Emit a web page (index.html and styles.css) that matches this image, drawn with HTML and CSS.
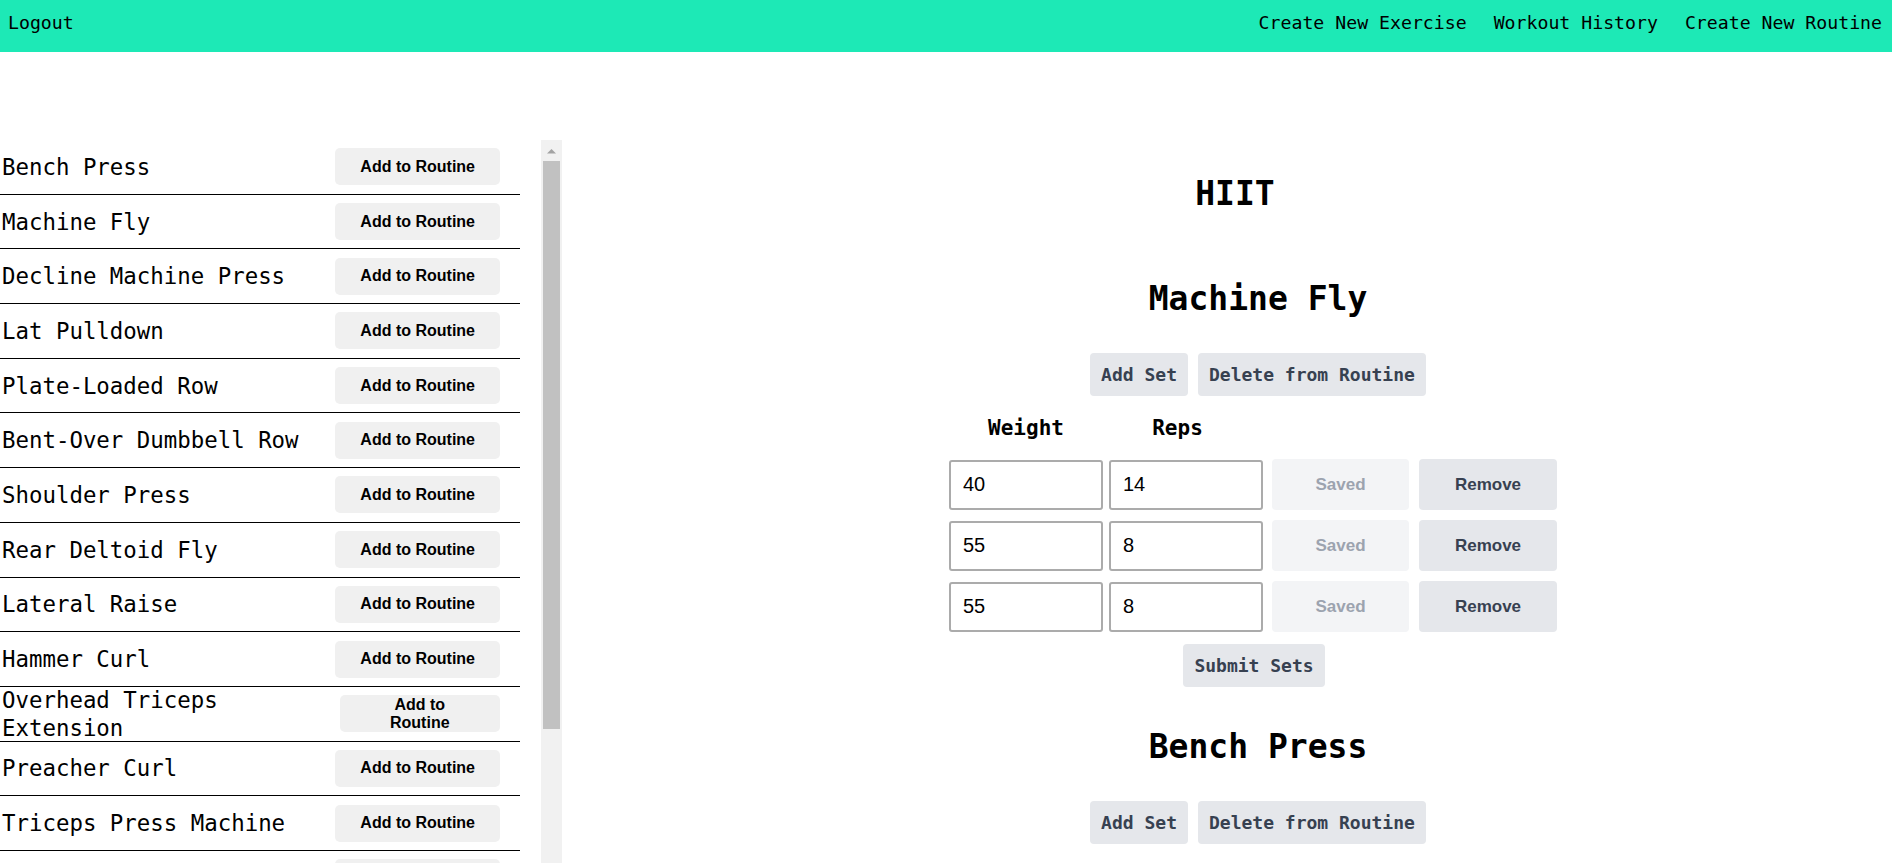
FILE: index.html
```html
<!DOCTYPE html>
<html lang="en">
<head>
<meta charset="utf-8">
<title>Routine</title>
<link rel="stylesheet" href="styles.css">
</head>
<body>
<nav class="topbar">
  <a class="nav-link">Logout</a>
  <div class="nav-right">
    <a class="nav-link">Create New Exercise</a>
    <a class="nav-link">Workout History</a>
    <a class="nav-link">Create New Routine</a>
  </div>
</nav>
<div class="page">
  <aside class="sidebar">
    <div class="list-viewport">
      <ul class="exercise-list">
        <li class="exercise-row"><p class="exercise-name">Bench Press</p><button class="add-btn">Add to Routine</button></li>
        <li class="exercise-row"><p class="exercise-name">Machine Fly</p><button class="add-btn">Add to Routine</button></li>
        <li class="exercise-row"><p class="exercise-name">Decline Machine Press</p><button class="add-btn">Add to Routine</button></li>
        <li class="exercise-row"><p class="exercise-name">Lat Pulldown</p><button class="add-btn">Add to Routine</button></li>
        <li class="exercise-row"><p class="exercise-name">Plate-Loaded Row</p><button class="add-btn">Add to Routine</button></li>
        <li class="exercise-row"><p class="exercise-name">Bent-Over Dumbbell Row</p><button class="add-btn">Add to Routine</button></li>
        <li class="exercise-row"><p class="exercise-name">Shoulder Press</p><button class="add-btn">Add to Routine</button></li>
        <li class="exercise-row"><p class="exercise-name">Rear Deltoid Fly</p><button class="add-btn">Add to Routine</button></li>
        <li class="exercise-row"><p class="exercise-name">Lateral Raise</p><button class="add-btn">Add to Routine</button></li>
        <li class="exercise-row"><p class="exercise-name">Hammer Curl</p><button class="add-btn">Add to Routine</button></li>
        <li class="exercise-row"><p class="exercise-name">Overhead Triceps Extension</p><button class="add-btn">Add to Routine</button></li>
        <li class="exercise-row"><p class="exercise-name">Preacher Curl</p><button class="add-btn">Add to Routine</button></li>
        <li class="exercise-row"><p class="exercise-name">Triceps Press Machine</p><button class="add-btn">Add to Routine</button></li>
        <li class="exercise-row"><p class="exercise-name">Leg Press</p><button class="add-btn">Add to Routine</button></li>
        <li class="exercise-row"><p class="exercise-name">Leg Extension</p><button class="add-btn">Add to Routine</button></li>
        <li class="exercise-row"><p class="exercise-name">Seated Leg Curl</p><button class="add-btn">Add to Routine</button></li>
      </ul>
    </div>
    <div class="scrollbar">
      <div class="scroll-up">
        <svg width="21" height="21" viewBox="0 0 21 21"><path d="M6 13.5h9l-4.5-4.5z" fill="#a3a3a3"/></svg>
      </div>
      <div class="scroll-thumb"></div>
    </div>
  </aside>
  <main class="main">
    <h1 class="routine-title">HIIT</h1>
    <section class="exercise">
      <h2 class="exercise-title">Machine Fly</h2>
      <div class="actions">
        <button class="btn-gray">Add Set</button>
        <button class="btn-gray">Delete from Routine</button>
      </div>
      <div class="sets">
        <div class="sets-head">
          <span class="head-cell">Weight</span>
          <span class="head-cell head-reps">Reps</span>
        </div>
        <div class="set-list">
          <div class="set-row">
            <input class="set-input" value="40">
            <input class="set-input set-input-reps" value="14">
            <button class="btn-saved">Saved</button>
            <button class="btn-remove">Remove</button>
          </div>
          <div class="set-row">
            <input class="set-input" value="55">
            <input class="set-input set-input-reps" value="8">
            <button class="btn-saved">Saved</button>
            <button class="btn-remove">Remove</button>
          </div>
          <div class="set-row">
            <input class="set-input" value="55">
            <input class="set-input set-input-reps" value="8">
            <button class="btn-saved">Saved</button>
            <button class="btn-remove">Remove</button>
          </div>
        </div>
      </div>
      <button class="btn-gray btn-submit">Submit Sets</button>
    </section>
    <section class="exercise">
      <h2 class="exercise-title">Bench Press</h2>
      <div class="actions">
        <button class="btn-gray">Add Set</button>
        <button class="btn-gray">Delete from Routine</button>
      </div>
    </section>
  </main>
</div>
</body>
</html>
```

FILE: styles.css
```css
html, body {
  margin: 0;
  padding: 0;
  overflow: hidden;
  height: 100%;
}

body {
  font-family: "DejaVu Sans Mono", "Liberation Mono", monospace;
  color: #000;
  background: #fff;
}

.topbar {
  height: 52px;
  box-sizing: border-box;
  background: #1de9b6;
  display: flex;
  justify-content: space-between;
  align-items: flex-start;
  padding: 12px 10px 0 8px;
}

.nav-link {
  font-size: 18.2px;
  line-height: 21px;
  color: #000;
  text-decoration: none;
  cursor: pointer;
}

.nav-right {
  display: flex;
  gap: 27px;
}

.page {
  display: flex;
  height: calc(100% - 52px);
  overflow: hidden;
}

.sidebar {
  flex: 0 0 562px;
  margin-top: 88px;
  display: flex;
  overflow: hidden;
}

.list-viewport {
  width: 541px;
  overflow: hidden;
}

.scrollbar {
  width: 21px;
  background: #f1f1f1;
  display: flex;
  flex-direction: column;
}

.scroll-up {
  height: 21px;
}

.scroll-up svg {
  display: block;
}

.scroll-thumb {
  height: 568px;
  margin: 0 2px;
  background: #c1c1c1;
}

.exercise-list {
  list-style: none;
  margin: 0;
  padding: 0;
}

.exercise-row {
  width: 498px;
  height: 53.7px;
  padding: 0 20px 0 2px;
  border-bottom: 1px solid #000;
  display: flex;
  align-items: center;
  justify-content: space-between;
}

.exercise-name {
  margin: 0;
  font-size: 22.4px;
  line-height: 28px;
}

.add-btn {
  height: 37px;
  padding: 0 25px;
  border: 0;
  border-radius: 5px;
  background: #f0f0f0;
  color: #000;
  font-family: "Liberation Sans", Arial, sans-serif;
  font-weight: bold;
  font-size: 16px;
  line-height: 18px;
}

.main {
  flex: 1;
  padding: 122px 0 0 16px;
  display: flex;
  flex-direction: column;
  align-items: center;
}

.routine-title {
  margin: 0 0 65px;
  font-size: 33px;
  line-height: 40px;
  font-weight: bold;
}

.exercise {
  display: flex;
  flex-direction: column;
  align-items: center;
  padding-left: 46px;
  margin-bottom: 40px;
}

.exercise-title {
  margin: 0;
  font-size: 33px;
  line-height: 40px;
  font-weight: bold;
}

.actions {
  margin-top: 34px;
  display: flex;
  gap: 10px;
}

.btn-gray {
  height: 43px;
  padding: 0 11px;
  border: 0;
  border-radius: 4px;
  background: #e5e7eb;
  color: #374151;
  font-family: "DejaVu Sans Mono", monospace;
  font-weight: bold;
  font-size: 18px;
}

.sets {
  margin-top: 20px;
  padding-right: 10px;
}

.sets-head {
  display: flex;
  margin-bottom: 18px;
  font-size: 21px;
  line-height: 25px;
  font-weight: bold;
}

.head-cell {
  width: 154px;
  margin-right: 6px;
  text-align: center;
}

.head-reps {
  box-sizing: border-box;
  padding-right: 17px;
}

.set-list {
  display: flex;
  flex-direction: column;
  gap: 10px;
}

.set-row {
  display: flex;
  align-items: center;
}

.set-input {
  box-sizing: border-box;
  width: 154px;
  height: 50px;
  margin: 0 6px 0 0;
  padding: 0 12px;
  border: 2px solid #ababab;
  border-radius: 3px;
  font-family: "Liberation Sans", Arial, sans-serif;
  font-size: 20px;
  color: #000;
  background: #fff;
}

.set-input-reps {
  margin-right: 9px;
}

.btn-saved,
.btn-remove {
  height: 51px;
  border: 0;
  border-radius: 4px;
  font-family: "Liberation Sans", Arial, sans-serif;
  font-weight: bold;
  font-size: 17px;
  padding: 0;
}

.btn-saved {
  width: 137px;
  margin-right: 10px;
  background: #f3f4f6;
  color: #9ca3af;
}

.btn-remove {
  width: 138px;
  background: #e5e7eb;
  color: #374151;
}

.btn-submit {
  margin-top: 12px;
  margin-right: 8px;
}
```
